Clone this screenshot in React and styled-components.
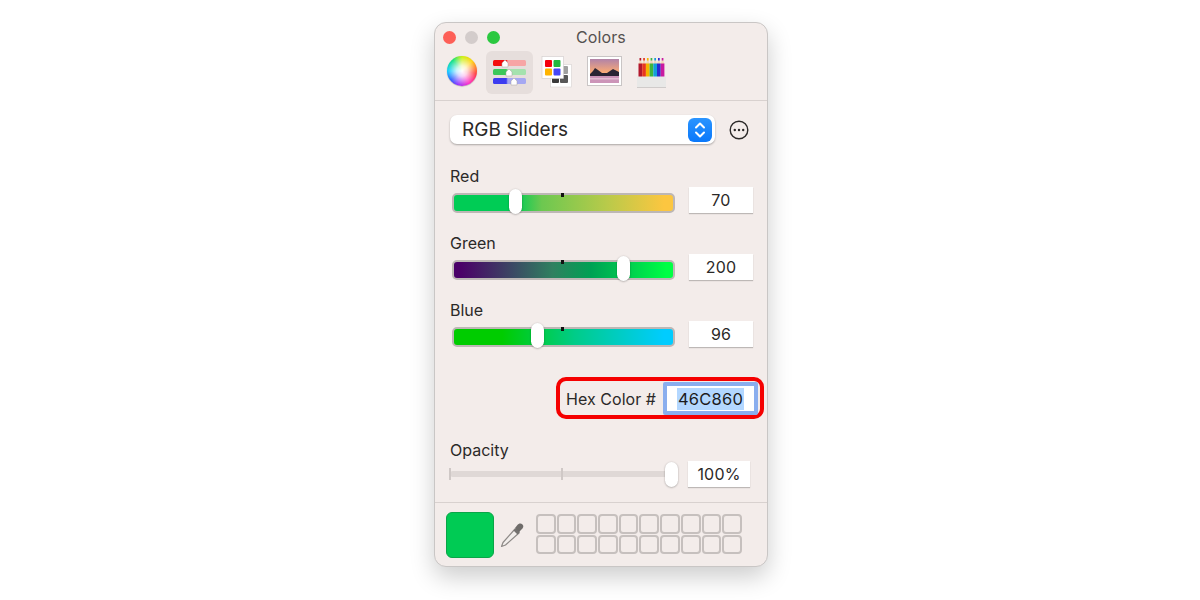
import React from 'react'
import styled, { createGlobalStyle } from 'styled-components'

const Global = createGlobalStyle`
html, body { margin: 0; padding: 0; background: #fff; }
body { font-family: Inter, "Liberation Sans", sans-serif; color: #2b2928; }
`

const Page = styled.div`
  width: 1200px;
  height: 600px;
  padding: 22px 0 0 434px;
  box-sizing: border-box;
  overflow: hidden;
`
const Win = styled.div`
  width: 334px;
  height: 545px;
  box-sizing: border-box;
  background: #f3ecea;
  border: 1px solid #c9c6c5;
  border-radius: 12px;
  box-shadow: 0 10px 24px rgba(0, 0, 0, 0.2);
  display: flex;
  flex-direction: column;
`
const TitleBar = styled.div`
  height: 28px;
  flex: none;
  display: flex;
  align-items: center;
  padding-left: 8px;
  position: relative;
`
const Lights = styled.div`
  display: flex;
  gap: 9px;
`
const Light = styled.span`
  width: 13px;
  height: 13px;
  border-radius: 50%;
  background: ${p => p.$color};
`
const Title = styled.div`
  position: absolute;
  left: 0;
  right: 0;
  top: 4px;
  text-align: center;
  font-size: 16px;
  line-height: 20px;
  color: #555150;
  letter-spacing: 0.1px;
`
const Toolbar = styled.div`
  height: 50px;
  flex: none;
  box-sizing: border-box;
  display: flex;
  padding: 0 0 6px 3px;
  border-bottom: 1px solid #d8d1cf;
`
const Tab = styled.div`
  width: 47.5px;
  height: 43px;
  display: flex;
  align-items: center;
  justify-content: center;
  border-radius: 6px;
  background: ${p => (p.$active ? '#e6dedc' : 'transparent')};
`
const Wheel = styled.div`
  width: 30px;
  height: 30px;
  margin-bottom: 3px;
  border-radius: 50%;
  background:
    radial-gradient(circle, #fff 0%, rgba(255, 255, 255, 0.8) 25%, rgba(255, 255, 255, 0) 72%),
    conic-gradient(#c8f000, #ffd000 45deg, #ff3030 100deg, #ff20c0 150deg, #9020ff 195deg, #2050ff 230deg, #00c8ff 270deg, #00e070 320deg, #c8f000);
  box-shadow: 0 0.5px 1px rgba(0, 0, 0, 0.35);
`
const Body = styled.div`
  flex: 1;
  padding: 14px 14px 0 15px;
  display: flex;
  flex-direction: column;
`
const SelectRow = styled.div`
  display: flex;
  align-items: center;
  margin-bottom: 22px;
`
const Select = styled.div`
  width: 265px;
  height: 29px;
  box-sizing: border-box;
  background: #fff;
  border-radius: 7px;
  box-shadow: 0 1px 2px rgba(0, 0, 0, 0.3);
  display: flex;
  align-items: center;
  justify-content: space-between;
  padding: 0 3px 0 12px;
  font-size: 19px;
  letter-spacing: 0.05px;
`
const Stepper = styled.div`
  width: 24px;
  height: 24px;
  border-radius: 6px;
  background: linear-gradient(#2a94ff, #0a78fa);
  display: flex;
  align-items: center;
  justify-content: center;
`
const MoreBtn = styled.div`
  margin-left: 14px;
  display: flex;
`
const Group = styled.div`
  margin-bottom: 20px;
`
const Label = styled.div`
  font-size: 16px;
  line-height: 20px;
  height: 21px;
`
const SliderRow = styled.div`
  display: flex;
  align-items: flex-start;
  justify-content: space-between;
  padding-left: 2px;
`
const Track = styled.div`
  position: relative;
  width: 223px;
  height: 20px;
  margin-top: 6px;
  box-sizing: border-box;
  border-radius: 5px;
  border: 2px solid #bdb7b5;
  background: ${p => p.$bg};
`
const Tick = styled.span`
  position: absolute;
  left: 107px;
  top: -2px;
  width: 3px;
  height: 4px;
  background: #111;
`
const Thumb = styled.span`
  position: absolute;
  top: -6px;
  width: 13px;
  height: 25px;
  margin-left: -7px;
  border-radius: 7px;
  background: #fff;
  box-shadow: 0 0.5px 2px rgba(0, 0, 0, 0.35);
`
const Field = styled.div`
  width: ${p => p.$w || 64}px;
  height: 26px;
  box-sizing: border-box;
  background: #fff;
  box-shadow: 0 1px 1px rgba(0, 0, 0, 0.22);
  display: flex;
  align-items: center;
  justify-content: center;
  font-size: 16px;
  letter-spacing: 0.2px;
`
const HexWrap = styled.div`
  align-self: flex-end;
  margin: 10px -11px 21px 0;
  width: 208px;
  height: 42px;
  box-sizing: border-box;
  border: 4px solid #f50000;
  border-radius: 10px;
  display: flex;
  align-items: center;
  justify-content: space-between;
  padding: 1px 2px 0 6px;
  font-size: 16px;
  letter-spacing: 0.05px;
`
const HexField = styled.div`
  width: 95px;
  height: 33px;
  box-sizing: border-box;
  border: 4px solid #8aaeee;
  background: #fff;
  border-radius: 2px;
  display: flex;
  align-items: center;
  justify-content: center;
`
const Selected = styled.span`
  background: #b3d7ff;
  font-size: 16.5px;
  line-height: 22px;
  padding: 0 1px;
  letter-spacing: 0.2px;
  color: #1c1b1b;
`
const OpacityRow = styled.div`
  display: flex;
  align-items: center;
  justify-content: space-between;
  padding-right: 3px;
`
const OpacityTrack = styled.div`
  position: relative;
  width: 222px;
  height: 6px;
  background: #dfd8d6;
  border-radius: 3px;
`
const OpacityMark = styled.span`
  position: absolute;
  left: ${p => p.$x}px;
  top: -3px;
  width: 2px;
  height: 12px;
  background: #cfc8c6;
`
const Footer = styled.div`
  height: 64px;
  flex: none;
  box-sizing: border-box;
  border-top: 1px solid #d8d1cf;
  display: flex;
  align-items: flex-start;
  padding: 9px 0 0 11px;
`
const Swatch = styled.div`
  width: 48px;
  height: 46px;
  box-sizing: border-box;
  border-radius: 6px;
  background: #00cb54;
  border: 1px solid #0aa548;
`
const Dropper = styled.div`
  margin: 10px 0 0 6px;
  width: 26px;
  display: flex;
`
const Cells = styled.div`
  margin: 2px 0 0 10px;
  display: grid;
  grid-template-columns: repeat(10, 19.7px);
  grid-auto-rows: 19.5px;
  gap: 1px;
`
const Cell = styled.span`
  box-sizing: border-box;
  border: 2px solid #c6c0be;
  border-radius: 4px;
`

function SlidersIcon() {
  const rows = [
    ['#f40d0d', '#f7a5a5', 12],
    ['#3cc85a', '#a5e2ae', 16],
    ['#3c3cf0', '#a5a8f2', 21],
  ]
  return (
    <svg width="33" height="26" viewBox="0 0 33 26">
      <defs>
        {rows.map((r, i) => (
          <linearGradient key={i} id={'sl' + i}>
            <stop offset="0" stopColor={r[0]} />
            <stop offset="0.4" stopColor={r[0]} />
            <stop offset="0.45" stopColor={r[1]} />
            <stop offset="1" stopColor={r[1]} />
          </linearGradient>
        ))}
      </defs>
      {rows.map((r, i) => (
        <g key={i}>
          <rect x="0" y={i * 9} width="33" height="6" rx="1.5" fill={`url(#sl${i})`} />
          <path d={`M${r[2] - 3} ${7 + i * 9}v-4l3-3 3 3v4z`} fill="#fff" stroke="#a8a1a1" strokeWidth="0.5" />
        </g>
      ))}
    </svg>
  )
}

function PaletteIcon() {
  return (
    <svg width="31" height="33" viewBox="0 0 31 33">
      <rect x="9.5" y="8.500" width="21" height="22.500" fill="#fff" stroke="#cfcaca" strokeWidth="0.5" />
      <rect x="19" y="10" width="8" height="8" rx="1" fill="#a0a0a0" />
      <rect x="11" y="19" width="7" height="8" rx="1" fill="#3a3a3a" />
      <rect x="19" y="19" width="8" height="8" rx="1" fill="#585858" />
      <rect x="1" y="0.5" width="21.500" height="22" fill="#fff" stroke="#cfcaca" strokeWidth="0.6" />
      <rect x="4" y="4" width="7" height="7" rx="1" fill="#f5000c" />
      <rect x="12.5" y="4" width="7" height="7" rx="1" fill="#22b83c" />
      <rect x="4" y="12.5" width="7" height="7" rx="1" fill="#ffb400" />
      <rect x="12.5" y="12.5" width="7" height="7" rx="1" fill="#4646f5" />
    </svg>
  )
}

function ImageIcon() {
  return (
    <svg width="35" height="33" viewBox="0 0 35 33">
      <defs>
        <linearGradient id="sky" x1="0" y1="0" x2="0" y2="1">
          <stop offset="0" stopColor="#b183a8" />
          <stop offset="0.75" stopColor="#f6a878" />
          <stop offset="1" stopColor="#f7b98a" />
        </linearGradient>
      </defs>
      <rect x="0.5" y="0.5" width="34" height="29" fill="#fff" stroke="#c9c5c5" />
      <rect x="3" y="3" width="29" height="17" fill="url(#sky)" />
      <path d="M3 18l3-3 2-3 3 2 4 3 5 0 3-2 3-2 6 3v4H3z" fill="#2a2433" />
      <rect x="3" y="20" width="29" height="7" fill="#cc94b8" />
      <rect x="3" y="22" width="29" height="1.500" fill="#e4bdd2" />
    </svg>
  )
}

function PencilsIcon() {
  const colors = ['#b3172c', '#e8371f', '#f5b400', '#3fb53c', '#12a0d8', '#2a2ad0', '#c81aa0']
  return (
    <svg width="29" height="30" viewBox="0 0 29 30">
      {colors.map((c, i) => {
        const x = 1.5 + i * 3.7
        return (
          <g key={c}>
            <path d={`M${x} 6l1.850-6 1.850 6z`} fill="#f1d6b8" />
            <rect x={x + 1} y="0" width="1.700" height="2.500" fill={c} />
            <rect x={x} y="5.500" width="3.700" height="14" fill={c} />
          </g>
        )
      })}
      <rect x="0" y="18.5" width="29" height="10.500" fill="#e8e8e7" />
      <rect x="0" y="29" width="29" height="1" fill="#cfcbca" />
    </svg>
  )
}

function Slider({ label, value, pos, bg }) {
  return (
    <Group>
      <Label>{label}</Label>
      <SliderRow>
        <Track $bg={bg}>
          <Tick />
          <Thumb style={{ left: pos }} />
        </Track>
        <Field>{value}</Field>
      </SliderRow>
    </Group>
  )
}

export default function App() {
  const cells = Array.from({ length: 20 })
  return (
    <Page>
      <Global />
      <Win>
        <TitleBar>
          <Lights>
            <Light $color="#fd5f57" />
            <Light $color="#d3cccb" />
            <Light $color="#2bc840" />
          </Lights>
          <Title>Colors</Title>
        </TitleBar>
        <Toolbar>
          <Tab><Wheel /></Tab>
          <Tab $active><SlidersIcon /></Tab>
          <Tab><PaletteIcon /></Tab>
          <Tab><ImageIcon /></Tab>
          <Tab><PencilsIcon /></Tab>
        </Toolbar>
        <Body>
          <SelectRow>
            <Select>
              RGB Sliders
              <Stepper>
                <svg width="12" height="18" viewBox="0 0 12 18" fill="none" stroke="#fff" strokeWidth="2" strokeLinecap="round" strokeLinejoin="round">
                  <path d="M2 6.5L6 2.5l4 4" />
                  <path d="M2 11.5l4 4 4-4" />
                </svg>
              </Stepper>
            </Select>
            <MoreBtn>
              <svg width="20" height="20" viewBox="0 0 20 20">
                <circle cx="10" cy="10" r="8.8" fill="none" stroke="#2b2928" strokeWidth="1.4" />
                <circle cx="5.8" cy="10" r="1.2" fill="#2b2928" />
                <circle cx="10" cy="10" r="1.2" fill="#2b2928" />
                <circle cx="14.2" cy="10" r="1.2" fill="#2b2928" />
              </svg>
            </MoreBtn>
          </SelectRow>
          <Slider label="Red" value="70" pos={62} bg="linear-gradient(90deg, #00cc55 0%, #00cc55 28%, #6cc850 40%, #b9ca4a 70%, #fcc640 96%)" />
          <Slider label="Green" value="200" pos={170} bg="linear-gradient(90deg, #4a0068 0%, #4a0068 3%, #2f8060 45%, #00a054 62%, #00c850 78%, #00ff44 97%)" />
          <Slider label="Blue" value="96" pos={84} bg="linear-gradient(90deg, #00cc00 0%, #00cc00 22%, #00cc88 55%, #00ccff 96%)" />
          <HexWrap>
            Hex Color #
            <HexField><Selected>46C860</Selected></HexField>
          </HexWrap>
          <Label>Opacity</Label>
          <OpacityRow>
            <OpacityTrack>
              <OpacityMark $x={-1} />
              <OpacityMark $x={111} />
              <Thumb style={{ left: 222, top: -9 }} />
            </OpacityTrack>
            <Field $w={62}>100%</Field>
          </OpacityRow>
        </Body>
        <Footer>
          <Swatch />
          <Dropper>
            <svg width="26" height="26" viewBox="0 0 26 26">
              <path d="M15 7L3 20.5 1.5 24.5 5.5 23 19 11z" fill="#f2eeec" stroke="#8d8987" strokeWidth="1.2" strokeLinejoin="round" />
              <path d="M13.5 8.5l4 4 2.5-2.5-4-4z" fill="#757270" />
              <path d="M17 3.5c2-2.5 4-2.5 5.500-1s1 3.500-1.500 5.500l-2 2-4-4z" fill="#6f6c6a" />
            </svg>
          </Dropper>
          <Cells>{cells.map((_, i) => <Cell key={i} />)}</Cells>
        </Footer>
      </Win>
    </Page>
  )
}
